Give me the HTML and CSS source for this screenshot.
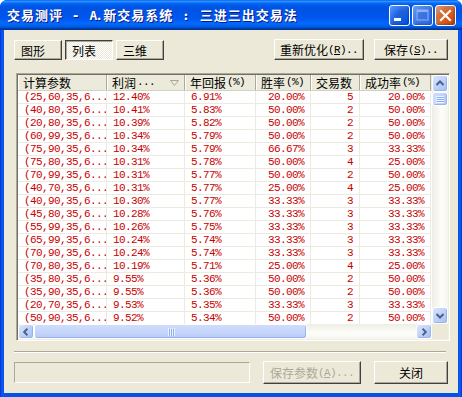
FILE: index.html
```html
<!DOCTYPE html>
<html>
<head>
<meta charset="utf-8">
<link rel="stylesheet" href="styles.css">
</head>
<body>
<div class="window">
  <div class="titlebar">
    <div class="title">交易测评<span class="t-asc"> - </span><span class="t-asc t-a">A.</span>新交易系统<span class="t-asc"> : </span>三进三出交易法</div>
    <div class="tb-btn tb-min"><svg width="21" height="21" viewBox="0 0 21 21"><rect x="5" y="13" width="7" height="3" fill="#fff"/></svg></div>
    <div class="tb-btn tb-max"><svg width="21" height="21" viewBox="0 0 21 21"><rect x="5" y="5" width="11" height="10" fill="none" stroke="#8fb0f5" stroke-width="1"/><rect x="5" y="5" width="11" height="2" fill="#8fb0f5"/></svg></div>
    <div class="tb-btn tb-close"><svg width="21" height="21" viewBox="0 0 21 21"><path d="M6 6 L15 15 M15 6 L6 15" stroke="#fff" stroke-width="2.2" stroke-linecap="square"/></svg></div>
  </div>
  <div class="body">
    <div class="toolbar">
      <div class="tabs">
        <div class="btn tab">图形</div>
        <div class="btn tab pressed">列表</div>
        <div class="btn tab">三维</div>
      </div>
      <div class="actions">
        <div class="btn act wide">重新优化<span class="mono">(<u>R</u>)..</span></div>
        <div class="btn act">保存<span class="mono">(<u>S</u>)..</span></div>
      </div>
    </div>

    <div class="list">
      <div class="list-main">
        <div class="list-view">
          <div class="header">
            <div class="hcell">计算参数</div>
            <div class="hcell sort">利润<span class="mono">...</span><svg class="tri" width="9" height="6" viewBox="0 0 9 6"><path d="M0.5 0.5 H8.5 L4.5 5.5 Z" fill="none" stroke="#aca899" stroke-width="1"/></svg></div>
            <div class="hcell">年回报<span class="mono">(%)</span></div>
            <div class="hcell">胜率<span class="mono">(%)</span></div>
            <div class="hcell">交易数</div>
            <div class="hcell">成功率<span class="mono">(%)</span></div>
          </div>
          <div class="rows">
            <div class="row"><span class="l">(25,60,35,6...</span><span class="l">12.40%</span><span class="l">6.91%</span><span class="r">20.00%</span><span class="r">5</span><span class="r">20.00%</span></div>
            <div class="row"><span class="l">(40,80,35,6...</span><span class="l">10.41%</span><span class="l">5.83%</span><span class="r">50.00%</span><span class="r">2</span><span class="r">50.00%</span></div>
            <div class="row"><span class="l">(20,80,35,6...</span><span class="l">10.39%</span><span class="l">5.82%</span><span class="r">50.00%</span><span class="r">2</span><span class="r">50.00%</span></div>
            <div class="row"><span class="l">(60,99,35,6...</span><span class="l">10.34%</span><span class="l">5.79%</span><span class="r">50.00%</span><span class="r">2</span><span class="r">50.00%</span></div>
            <div class="row"><span class="l">(75,90,35,6...</span><span class="l">10.34%</span><span class="l">5.79%</span><span class="r">66.67%</span><span class="r">3</span><span class="r">33.33%</span></div>
            <div class="row"><span class="l">(75,80,35,6...</span><span class="l">10.31%</span><span class="l">5.78%</span><span class="r">50.00%</span><span class="r">4</span><span class="r">25.00%</span></div>
            <div class="row"><span class="l">(70,99,35,6...</span><span class="l">10.31%</span><span class="l">5.77%</span><span class="r">50.00%</span><span class="r">2</span><span class="r">50.00%</span></div>
            <div class="row"><span class="l">(40,70,35,6...</span><span class="l">10.31%</span><span class="l">5.77%</span><span class="r">25.00%</span><span class="r">4</span><span class="r">25.00%</span></div>
            <div class="row"><span class="l">(40,90,35,6...</span><span class="l">10.30%</span><span class="l">5.77%</span><span class="r">33.33%</span><span class="r">3</span><span class="r">33.33%</span></div>
            <div class="row"><span class="l">(45,80,35,6...</span><span class="l">10.28%</span><span class="l">5.76%</span><span class="r">33.33%</span><span class="r">3</span><span class="r">33.33%</span></div>
            <div class="row"><span class="l">(55,99,35,6...</span><span class="l">10.26%</span><span class="l">5.75%</span><span class="r">33.33%</span><span class="r">3</span><span class="r">33.33%</span></div>
            <div class="row"><span class="l">(65,99,35,6...</span><span class="l">10.24%</span><span class="l">5.74%</span><span class="r">33.33%</span><span class="r">3</span><span class="r">33.33%</span></div>
            <div class="row"><span class="l">(70,90,35,6...</span><span class="l">10.24%</span><span class="l">5.74%</span><span class="r">33.33%</span><span class="r">3</span><span class="r">33.33%</span></div>
            <div class="row"><span class="l">(70,80,35,6...</span><span class="l">10.19%</span><span class="l">5.71%</span><span class="r">25.00%</span><span class="r">4</span><span class="r">25.00%</span></div>
            <div class="row"><span class="l">(35,80,35,6...</span><span class="l">9.55%</span><span class="l">5.36%</span><span class="r">50.00%</span><span class="r">2</span><span class="r">50.00%</span></div>
            <div class="row"><span class="l">(35,90,35,6...</span><span class="l">9.55%</span><span class="l">5.36%</span><span class="r">50.00%</span><span class="r">2</span><span class="r">50.00%</span></div>
            <div class="row"><span class="l">(20,70,35,6...</span><span class="l">9.53%</span><span class="l">5.35%</span><span class="r">33.33%</span><span class="r">3</span><span class="r">33.33%</span></div>
            <div class="row"><span class="l">(50,90,35,6...</span><span class="l">9.52%</span><span class="l">5.34%</span><span class="r">50.00%</span><span class="r">2</span><span class="r">50.00%</span></div>
          </div>
        </div>
        <div class="vscroll">
          <div class="sb-btn"><svg width="14" height="15" viewBox="0 0 14 15"><path d="M3.5 9 L7 5.5 L10.5 9" fill="none" stroke="#4d6185" stroke-width="2"/></svg></div>
          <div class="vthumb"><svg width="8" height="8" viewBox="0 0 8 8"><path d="M0 1.5 H8 M0 3.5 H8 M0 5.5 H8 M0 7.5 H8" stroke="#eef4fe" stroke-width="1"/><path d="M1 2.5 H8 M1 4.5 H8 M1 6.5 H8" stroke="#8cb0f8" stroke-width="1"/></svg></div>
          <div class="vtrack"></div>
          <div class="sb-btn"><svg width="14" height="15" viewBox="0 0 14 15"><path d="M3.5 6 L7 9.5 L10.5 6" fill="none" stroke="#4d6185" stroke-width="2"/></svg></div>
        </div>
      </div>
      <div class="hscroll-row">
        <div class="hscroll">
          <div class="sb-btn h"><svg width="15" height="14" viewBox="0 0 15 14"><path d="M9 3.5 L5.5 7 L9 10.5" fill="none" stroke="#4d6185" stroke-width="2"/></svg></div>
          <div class="hthumb"><svg width="8" height="8" viewBox="0 0 8 8"><path d="M1.5 0 V8 M3.5 0 V8 M5.5 0 V8 M7.5 0 V8" stroke="#eef4fe" stroke-width="1"/><path d="M2.5 1 V8 M4.5 1 V8 M6.5 1 V8" stroke="#8cb0f8" stroke-width="1"/></svg></div>
          <div class="htrack"></div>
          <div class="sb-btn h"><svg width="15" height="14" viewBox="0 0 15 14"><path d="M6 3.5 L9.5 7 L6 10.5" fill="none" stroke="#4d6185" stroke-width="2"/></svg></div>
        </div>
        <div class="corner"></div>
      </div>
    </div>

    <div class="separator"></div>

    <div class="footer">
      <div class="status"></div>
      <div class="btn foot disabled">保存参数<span class="mono">(<u>A</u>)...</span></div>
      <div class="btn foot close">关闭</div>
    </div>
  </div>
</div>
</body>
</html>
```

FILE: styles.css
```css
* { box-sizing: border-box; }
html, body { margin: 0; padding: 0; }
body {
  width: 462px;
  height: 397px;
  overflow: hidden;
  background: #ffffff;
  font-family: "Noto Sans CJK SC", "Noto Sans CJK JP", sans-serif;
  font-size: 12px;
  color: #000;
}
.mono {
  font-family: "Liberation Mono", "DejaVu Sans Mono", monospace;
  font-size: 11px;
  letter-spacing: -0.6px;
}
.window {
  width: 462px;
  height: 397px;
  display: flex;
  flex-direction: column;
  background: linear-gradient(to right, #0831d9 0, #0a5bf0 2px, #0553e6 4px, #0553e6 458px, #0a5bf0 460px, #0831d9 462px);
  border-radius: 7px 7px 0 0;
  overflow: hidden;
}
.titlebar {
  height: 30px;
  flex: none;
  display: flex;
  align-items: center;
  gap: 2px;
  padding: 0 6px 0 7px;
  background: linear-gradient(to bottom, #0058ee 0%, #3593ff 4%, #288eff 6%, #127dff 8%, #036ffc 10%, #0262ee 14%, #0057e5 20%, #0054e3 24%, #0055eb 56%, #005bf5 66%, #026afe 76%, #0062ef 86%, #0052d6 92%, #0040ab 94%, #003092 100%);
}
.title {
  flex: 1;
  color: #fff;
  font-weight: bold;
  font-size: 13px;
  letter-spacing: 1px;
  white-space: pre;
  text-shadow: 1px 1px 0 #0a1883;
  margin-top: -1px;
}
.t-asc {
  font-family: "DejaVu Sans Mono", monospace;
  font-size: 13px;
}
.t-a { letter-spacing: -2px; margin-right: 2px; }
.tb-btn {
  width: 21px;
  height: 21px;
  border-radius: 3px;
  border: 1px solid #fff;
  box-shadow: inset -1px -1px 2px rgba(0, 20, 120, 0.35);
  position: relative;
  overflow: hidden;
}
.tb-btn svg { position: absolute; left: -1px; top: -1px; }
.tb-min {
  background: radial-gradient(circle at 90% 90%, #0054e9 0%, #2263d5 55%, #4283ff 80%, #5a96fa 100%);
}
.tb-max {
  background: radial-gradient(circle at 90% 90%, #2e6ee6 0%, #3b76e1 55%, #5a8ff0 80%, #6a9ff7 100%);
}
.tb-close {
  background: radial-gradient(circle at 90% 90%, #cc4600 0%, #dc6527 55%, #cd7546 70%, #e7a382 100%);
}
.body {
  flex: 1;
  margin: 0 4px 4px 4px;
  background: #ece9d8;
  display: flex;
  flex-direction: column;
}
.toolbar {
  display: flex;
  justify-content: space-between;
  align-items: flex-start;
  margin: 9px 10px 0 10px;
}
.tabs {
  display: flex;
  gap: 3px;
  margin-top: 1px;
}
.actions {
  display: flex;
  gap: 10px;
}
.btn {
  background: #ece9d8;
  border-top: 1px solid #fff;
  border-left: 1px solid #fff;
  border-right: 1px solid #404040;
  border-bottom: 1px solid #404040;
  box-shadow: inset -1px -1px 0 #aca899;
  display: flex;
  align-items: center;
  white-space: nowrap;
}
.tab {
  width: 48px;
  height: 20px;
  padding-left: 6px;
}
.tab.pressed {
  border-top: 1px solid #404040;
  border-left: 1px solid #404040;
  border-right: 1px solid #fff;
  border-bottom: 1px solid #fff;
  box-shadow: inset 1px 1px 0 #aca899;
  background: repeating-conic-gradient(#ffffff 0 25%, #ece9d8 0 50%) 0 0 / 2px 2px;
}
.act {
  height: 21px;
  width: 74px;
  justify-content: center;
}
.act.wide { width: 90px; }
u { text-decoration: underline; text-underline-offset: 1px; }

.list {
  margin: 13px 0 0 12px;
  width: 434px;
  height: 268px;
  border-top: 1px solid #aca899;
  border-left: 1px solid #aca899;
  border-right: 1px solid #fff;
  border-bottom: 1px solid #fff;
  box-shadow: inset 1px 1px 0 #716f64, inset -1px -1px 0 #f1efe2;
  padding: 1px;
  display: flex;
  flex-direction: column;
  background: #fff;
}
.list-main {
  height: 249px;
  display: flex;
  overflow: hidden;
}
.list-view {
  width: 414px;
  overflow: hidden;
}
.header, .row {
  display: grid;
  grid-template-columns: 89px 78px 71px 55px 49px 71px;
}
.header {
  height: 16px;
  background: #ebeadb;
  border-bottom: 1px solid #d6d2c2;
}
.hcell {
  display: flex;
  align-items: center;
  padding-left: 5px;
  border-right: 1px solid #aca899;
  box-shadow: inset 1px 0 0 #fff;
  white-space: nowrap;
  overflow: hidden;
  line-height: 15px;
}
.hcell .mono { margin-left: 1px; }
.hcell.sort { position: relative; }
.tri { position: absolute; left: 63px; top: 5px; }
.row { height: 13px; }
.row span {
  font-family: "Liberation Mono", "DejaVu Sans Mono", monospace;
  font-size: 11px;
  letter-spacing: -0.6px;
  line-height: 12px;
  color: #c80000;
  border-right: 1px solid #ecebe2;
  border-bottom: 1px solid #ecebe2;
  white-space: nowrap;
  overflow: hidden;
}
.row .l { padding-left: 6px; text-align: left; }
.row .r { padding-right: 6px; text-align: right; }

.vscroll {
  width: 16px;
  display: flex;
  flex-direction: column;
  background: linear-gradient(to right, #eeede5, #fdfdfa 60%, #f6f5ef);
}
.sb-btn {
  width: 16px;
  height: 17px;
  flex: none;
  border: 1px solid #fff;
  border-radius: 3px;
  background: linear-gradient(135deg, #dbe6fd, #b9cdf7 60%, #a8c0f4);
  box-shadow: inset -1px -1px 0 #9ab4eb;
  display: flex;
  align-items: center;
  justify-content: center;
}
.vthumb {
  height: 14px;
  flex: none;
  border: 1px solid #fff;
  border-radius: 3px;
  background: linear-gradient(to right, #cfdcfc, #c4d4fb 60%, #b6c9f5);
  box-shadow: inset -1px -1px 0 #9ab4eb;
  display: flex;
  align-items: center;
  justify-content: center;
}
.vtrack { flex: 1; }
.hscroll-row {
  height: 15px;
  display: flex;
}
.hscroll {
  width: 414px;
  display: flex;
  background: linear-gradient(to bottom, #eeede5, #fdfdfa 60%, #f6f5ef);
}
.sb-btn.h {
  width: 16px;
  height: 15px;
}
.hthumb {
  width: 273px;
  flex: none;
  border: 1px solid #fff;
  border-radius: 3px;
  background: linear-gradient(to bottom, #cfdcfc, #c4d4fb 60%, #b6c9f5);
  box-shadow: inset -1px -1px 0 #9ab4eb;
  display: flex;
  align-items: center;
  justify-content: center;
}
.htrack { flex: 1; }
.corner {
  width: 16px;
  background: #ece9d8;
}
.separator {
  margin: 10px 12px 0 10px;
  height: 2px;
  border-top: 1px solid #aca899;
  border-bottom: 1px solid #fff;
}
.footer {
  display: flex;
  align-items: center;
  margin: 8px 10px 0 10px;
  height: 23px;
}
.status {
  width: 236px;
  height: 21px;
  border-top: 1px solid #aca899;
  border-left: 1px solid #aca899;
  border-right: 1px solid #fff;
  border-bottom: 1px solid #fff;
  margin-right: 13px;
}
.foot {
  height: 23px;
  justify-content: center;
}
.foot.disabled {
  width: 98px;
  color: #aca899;
  margin-right: 13px;
}
.foot.close { width: 74px; }
```
